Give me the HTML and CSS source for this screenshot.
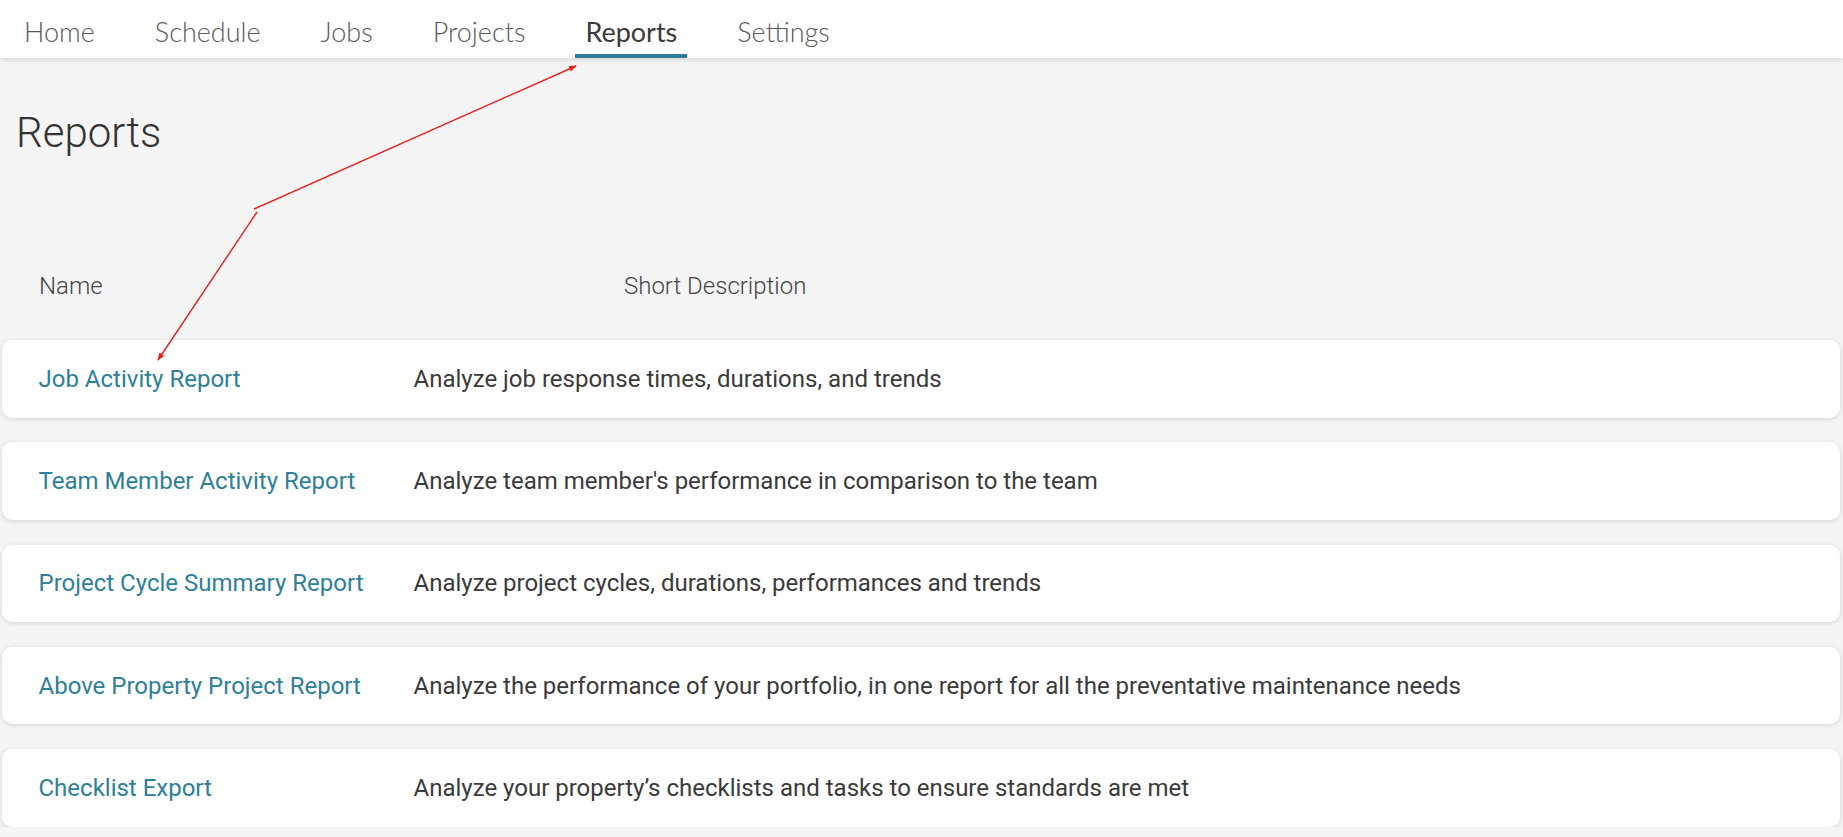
FILE: index.html
```html
<!DOCTYPE html>
<html lang="en">
<head>
  <meta charset="UTF-8" />
  <title>Reports</title>
  <link rel="stylesheet" href="styles.css">
</head>
<body>

<header class="topbar">
  <nav class="tabs">
    <a class="tab" href="#">Home</a>
    <a class="tab" href="#">Schedule</a>
    <a class="tab" href="#">Jobs</a>
    <a class="tab" href="#">Projects</a>
    <a class="tab active" href="#">Reports</a>
    <a class="tab" href="#">Settings</a>
  </nav>
</header>

<div class="page">
  <h1 class="page-title">Reports</h1>

  <div class="list-head">
    <span class="head-name">Name</span>
    <span class="head-desc">Short Description</span>
  </div>

  <div class="report-list">
    <div class="report-card">
      <a class="report-name" href="#">Job Activity Report</a>
      <span class="report-desc">Analyze job response times, durations, and trends</span>
    </div>
    <div class="report-card">
      <a class="report-name" href="#">Team Member Activity Report</a>
      <span class="report-desc">Analyze team member's performance in comparison to the team</span>
    </div>
    <div class="report-card">
      <a class="report-name" href="#">Project Cycle Summary Report</a>
      <span class="report-desc">Analyze project cycles, durations, performances and trends</span>
    </div>
    <div class="report-card">
      <a class="report-name" href="#">Above Property Project Report</a>
      <span class="report-desc">Analyze the performance of your portfolio, in one report for all the preventative maintenance needs</span>
    </div>
    <div class="report-card">
      <a class="report-name" href="#">Checklist Export</a>
      <span class="report-desc">Analyze your property’s checklists and tasks to ensure standards are met</span>
    </div>
  </div>
</div>

<!-- annotation arrows drawn over the page -->
<svg class="annotation" width="1843" height="837" viewBox="0 0 1843 837">
  <defs>
    <marker id="head" markerWidth="8" markerHeight="8" refX="7" refY="4" orient="auto" markerUnits="userSpaceOnUse">
      <path d="M0,1 L8,4 L0,7 Z" fill="#e8201c"/>
    </marker>
  </defs>
  <line x1="254" y1="209" x2="576" y2="66" stroke="#e8201c" stroke-width="1.4" marker-end="url(#head)"/>
  <line x1="257" y1="212" x2="158" y2="360" stroke="#e8201c" stroke-width="1.4" marker-end="url(#head)"/>
</svg>

</body>
</html>
```

FILE: styles.css
```css
body {
  margin: 0;
  background: #f5f5f5;
  font-family: Roboto, "Liberation Sans", sans-serif;
  color: #333;
}
a {
  text-decoration: none;
}
.topbar {
  position: relative;
  z-index: 1;
  height: 58px;
  background: #fff;
  box-shadow: 0 2px 5px rgba(0,0,0,0.12);
}
.tabs {
  display: flex;
  gap: 40px;
  height: 100%;
  padding-left: 14px;
}
.tab {
  display: flex;
  align-items: center;
  padding: 8px 10px 0;
  font-family: Lato, sans-serif;
  font-weight: 300;
  font-size: 27px;
  color: #5a5a5a;
  border-bottom: 4px solid transparent;
  box-sizing: border-box;
}
.tab.active {
  font-weight: 400;
  color: #3a3a3a;
  border-bottom-color: #2f7d96;
}
.page {
  padding: 0 3px 0 2px;
}
.page-title {
  margin: 50px 0 0 14px;
  font-size: 42px;
  line-height: 50px;
  font-weight: 300;
  color: #333;
}
.list-head {
  display: flex;
  margin-top: 114px;
  font-size: 24px;
  line-height: 28px;
  font-weight: 300;
  color: #444;
}
.head-name {
  width: 585px;
  padding-left: 37px;
}
.report-list {
  display: flex;
  flex-direction: column;
  gap: 24.7px;
  margin-top: 40px;
}
.report-card {
  display: flex;
  align-items: center;
  height: 77.6px;
  padding-left: 36.5px;
  background: #fff;
  border-radius: 10px;
  box-shadow: 0 1px 5px rgba(0,0,0,0.14);
  font-size: 24px;
}
.report-name {
  width: 375px;
  color: #2e7f99;
}
.report-desc {
  color: #3a3a3a;
}
.annotation {
  position: absolute;
  top: 0;
  left: 0;
  z-index: 2;
  pointer-events: none;
}
```
